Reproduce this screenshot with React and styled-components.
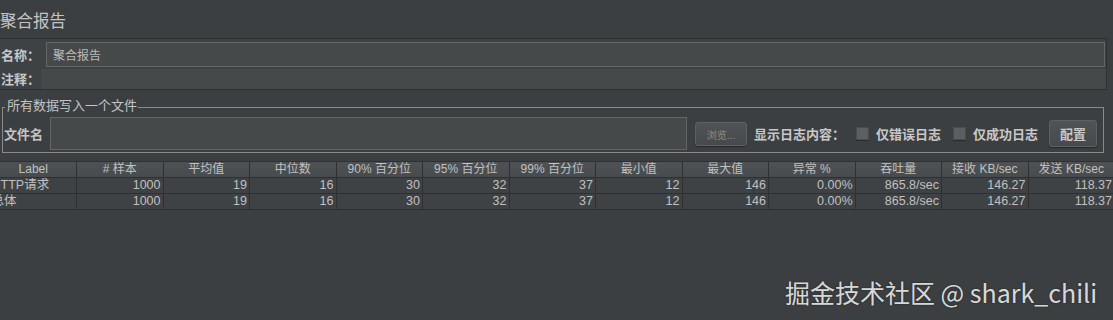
import React from "react";
import styled, { createGlobalStyle } from "styled-components";

const Global = createGlobalStyle`
  html, body { margin: 0; padding: 0; background: #3c3f41; }
  body { width: 1113px; height: 320px; overflow: hidden; font-family: "Noto Sans CJK SC", "Liberation Sans", sans-serif; color: #bbbbbb; }
`;

const Page = styled.div`
  position: relative;
  width: 1113px;
  height: 320px;
  background: #3c3f41;
  overflow: hidden;
`;

const Title = styled.div`
  font-size: 16.5px;
  line-height: 20px;
  padding: 10px 0 0 0;
  height: 28px;
  box-sizing: border-box;
  color: #c4c4c4;
`;

const NameBox = styled.div`
  margin-top: 10px;
  width: 1107px;
  height: 52px;
  box-sizing: border-box;
  border: 1px solid #2d2f31;
  border-left: none;
  background: #3f4244;
  display: flex;
  flex-direction: column;
`;

const NameRow = styled.div`
  display: flex;
  align-items: center;
  height: ${(p) => p.$h}px;
  padding-top: ${(p) => p.$pt || 0}px;
`;

const RowLabel = styled.div`
  font-size: 13px;
  font-weight: bold;
  width: ${(p) => p.$w}px;
  padding-left: 1px;
  color: #c8c8c8;
  flex: none;
`;

const NameInput = styled.div`
  flex: 1;
  height: 25px;
  box-sizing: border-box;
  background: #45494a;
  border: 1px solid #646666;
  font-size: 12px;
  line-height: 23px;
  padding-left: 6px;
  color: #bbbbbb;
  margin-right: 1px;
`;

const CommentInput = styled.div`
  flex: 1;
  align-self: stretch;
  background: #45494a;
  margin-top: 1px;
`;

const Fieldset = styled.fieldset`
  margin: 8px 0 0 2px;
  width: 1102px;
  height: 55px;
  box-sizing: border-box;
  border: 1px solid #8a8a8a;
  padding: 0 4px 0 1px;
  display: flex;
  align-items: flex-start;
`;

const Legend = styled.legend`
  font-size: 13px;
  padding: 0 1px 4px 2px;
  margin-left: 1px;
  color: #c4c4c4;
  line-height: 14px;
`;

const FileLabel = styled.div`
  font-size: 13px;
  font-weight: bold;
  line-height: 17px;
  color: #c4c4c4;
  width: 46px;
  flex: none;
  margin-top: 9px;
`;

const FileInput = styled.div`
  width: 637px;
  height: 33px;
  box-sizing: border-box;
  background: #45494a;
  border: 1px solid #646666;
  margin-top: 1px;
  flex: none;
`;

const Button = styled.div`
  flex: none;
  width: ${(p) => p.$w}px;
  height: ${(p) => p.$h}px;
  margin-left: ${(p) => p.$ml}px;
  margin-top: ${(p) => p.$mt || 0}px;
  box-sizing: border-box;
  border: 1px solid #5e6163;
  border-radius: 3px;
  background: linear-gradient(#4f5355, #474a4c);
  display: flex;
  align-items: center;
  justify-content: center;
  font-size: ${(p) => p.$fs}px;
  font-weight: ${(p) => (p.$bold ? "bold" : "normal")};
  color: ${(p) => (p.$dim ? "#8c8c8c" : "#c8c8c8")};
  box-shadow: 0 1px 1px rgba(0,0,0,0.35);
`;

const OptLabel = styled.div`
  flex: none;
  font-size: 13px;
  font-weight: bold;
  line-height: 17px;
  color: #c8c8c8;
  margin-left: ${(p) => p.$ml}px;
  margin-top: 9px;
`;

const Check = styled.div`
  flex: none;
  width: 13px;
  height: 13px;
  box-sizing: border-box;
  background: #5c5f61;
  border: 1px solid #4a4c4e;
  margin-left: ${(p) => p.$ml}px;
  margin-top: 11px;
  box-shadow: 0 1px 0 #2a2b2c;
`;

const Table = styled.div`
  margin: 8px 0 0 -9.5px;
  display: grid;
  grid-template-columns: repeat(13, 86.5px);
  width: 1124.5px;
`;

const HeadCell = styled.div`
  height: 17px;
  box-sizing: border-box;
  background: linear-gradient(#4e5254, #484b4d);
  border-right: 1px solid #2e3032;
  border-bottom: 1px solid #2e3032;
  border-top: 1px solid #2e3032;
  font-size: 12px;
  line-height: 15px;
  text-align: center;
  color: #c0c0c0;
  white-space: nowrap;
  overflow: hidden;
  font-family: "Liberation Sans", "Noto Sans CJK SC", sans-serif;
`;

const Cell = styled.div`
  height: 16px;
  box-sizing: border-box;
  background: #3f4244;
  border-right: 1px solid #2e3032;
  border-bottom: 1px solid #2e3032;
  font-size: 12.5px;
  line-height: 15px;
  text-align: ${(p) => (p.$left ? "left" : "right")};
  padding: ${(p) => (p.$left ? "0 0 0 1px" : "0 2px 0 0")};
  color: #c0c0c0;
  white-space: nowrap;
  overflow: hidden;
  font-family: "Liberation Sans", "Noto Sans CJK SC", sans-serif;
`;

const Watermark = styled.div`
  position: absolute;
  left: 785px;
  top: 276px;
  font-size: 25px;
  line-height: 32px;
  color: rgba(240, 240, 240, 0.9);
  text-shadow: 0 0 2px rgba(0,0,0,0.5);
  font-family: "Noto Sans CJK SC", sans-serif;
  white-space: nowrap;
`;

const headers = ["Label", "# 样本", "平均值", "中位数", "90% 百分位", "95% 百分位", "99% 百分位", "最小值", "最大值", "异常 %", "吞吐量", "接收 KB/sec", "发送 KB/sec"];
const rows = [
  ["HTTP请求", "1000", "19", "16", "30", "32", "37", "12", "146", "0.00%", "865.8/sec", "146.27", "118.37"],
  ["总体", "1000", "19", "16", "30", "32", "37", "12", "146", "0.00%", "865.8/sec", "146.27", "118.37"],
];

export default function App() {
  return (
    <Page>
      <Global />
      <Title>聚合报告</Title>
      <NameBox>
        <NameRow $h={29} $pt={1}>
          <RowLabel $w={45}>名称：</RowLabel>
          <NameInput>聚合报告</NameInput>
        </NameRow>
        <NameRow $h={21}>
          <RowLabel $w={40}>注释：</RowLabel>
          <CommentInput />
        </NameRow>
      </NameBox>
      <Fieldset>
        <Legend>所有数据写入一个文件</Legend>
        <FileLabel>文件名</FileLabel>
        <FileInput />
        <Button $w={52} $h={24} $ml={8} $mt={6} $fs={10} $dim>浏览...</Button>
        <OptLabel $ml={7}>显示日志内容：</OptLabel>
        <Check $ml={11} />
        <OptLabel $ml={7}>仅错误日志</OptLabel>
        <Check $ml={12} />
        <OptLabel $ml={7}>仅成功日志</OptLabel>
        <Button $w={48} $h={27} $ml={11} $mt={4} $fs={13} $bold>配置</Button>
      </Fieldset>
      <Table>
        {headers.map((h) => (
          <HeadCell key={h}>{h}</HeadCell>
        ))}
        {rows.map((r, i) =>
          r.map((c, j) => (
            <Cell key={i + "-" + j} $left={j === 0}>{c}</Cell>
          ))
        )}
      </Table>
      <Watermark>掘金技术社区 @ shark_chili</Watermark>
    </Page>
  );
}
